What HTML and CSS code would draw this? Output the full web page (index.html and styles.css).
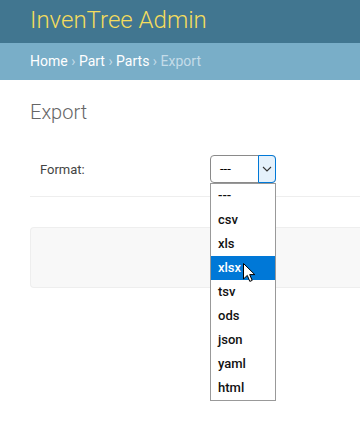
FILE: index.html
```html
<!DOCTYPE html>
<html>
  <head>
    <title>Export | InvenTree Admin</title>
    <link rel="stylesheet" href="styles.css">
  </head>
  <body>
    <div id="header">
      <h1 id="site-name">InvenTree Admin</h1>
    </div>

    <div class="breadcrumbs">
      <a href="#">Home</a> <span class="sep">&rsaquo;</span>
      <a href="#">Part</a> <span class="sep">&rsaquo;</span>
      <a href="#">Parts</a> <span class="sep">&rsaquo;</span>
      <span class="current">Export</span>
    </div>

    <div id="content">
      <h1 class="page-title">Export</h1>

      <form>
        <div class="form-row">
          <label class="field-label" for="format">Format:</label>
          <div class="select-wrap">
            <div class="select-box" id="format">
              <span class="select-value">---</span>
              <span class="select-arrow">
                <svg width="10" height="6" viewBox="0 0 10 6">
                  <path d="M1 1 L5 5 L9 1" fill="none" stroke="#333" stroke-width="1.1"/>
                </svg>
              </span>
            </div>

            <!-- open dropdown list -->
            <ul class="select-list">
              <li>---</li>
              <li>csv</li>
              <li>xls</li>
              <li class="active">xlsx</li>
              <li>tsv</li>
              <li>ods</li>
              <li>json</li>
              <li>yaml</li>
              <li>html</li>
            </ul>

            <svg class="cursor" width="13" height="20" viewBox="0 0 13 20">
              <path d="M0.5 0.5 L0.5 16 L4.3 12.4 L6.8 18.4 L9.2 17.4 L6.7 11.6 L11.8 11.6 Z" fill="#fff" stroke="#000" stroke-width="1"/>
            </svg>
          </div>
        </div>

        <div class="submit-row"></div>
      </form>
    </div>
  </body>
</html>
```

FILE: styles.css
```css
body {
  margin: 0;
  font-family: Roboto, "Liberation Sans", Arial, sans-serif;
  background-color: #fff;
  color: #333;
  min-height: 434px;
}

#header {
  background-color: #417690;
  height: 43px;
  padding: 0 30px;
  display: flex;
  align-items: center;
}

#site-name {
  margin: 0;
  font-size: 24px;
  font-weight: 300;
  color: #f5dd5d;
  line-height: 1;
  padding-bottom: 4px;
}

.breadcrumbs {
  background-color: #79aec8;
  height: 37px;
  line-height: 37px;
  padding: 0 30px;
  font-size: 14px;
  color: #c4dce8;
}

.breadcrumbs a {
  color: #fff;
  text-decoration: none;
}

.breadcrumbs .sep {
  color: #c4dce8;
}

#content {
  padding: 0 0 0 30px;
}

.page-title {
  margin: 0;
  padding: 20px 0 0;
  height: 45px;
  font-size: 20px;
  font-weight: 300;
  color: #666;
  line-height: 24px;
}

.form-row {
  display: flex;
  align-items: center;
  padding: 10px 10px 13px;
  border-bottom: 1px solid #eee;
  height: 28px;
}

.field-label {
  width: 170px;
  font-size: 13px;
  color: #444;
}

.select-wrap {
  position: relative;
}

.select-box {
  width: 64px;
  height: 26px;
  border: 1px solid #8a8a8a;
  border-radius: 4px;
  display: flex;
  background-color: #fff;
}

.select-value {
  flex: 1;
  padding-left: 9px;
  font-size: 13px;
  line-height: 26px;
  color: #000;
}

.select-arrow {
  width: 16px;
  margin: -1px -1px -1px 0;
  border: 1px solid #0078d7;
  border-radius: 0 4px 4px 0;
  background-color: #e5f1fb;
  display: flex;
  align-items: center;
  justify-content: center;
}

.select-list {
  position: absolute;
  left: 0;
  top: 28px;
  width: 64px;
  margin: 0;
  padding: 0;
  list-style: none;
  border: 1px solid #999;
  background-color: #fff;
  z-index: 2;
}

.select-list li {
  height: 24px;
  line-height: 24px;
  padding-left: 7px;
  font-size: 13px;
  font-weight: 500;
  color: #111;
}

.select-list li.active {
  background-color: #0078d7;
  color: #fff;
}

.cursor {
  position: absolute;
  left: 33px;
  top: 108px;
  z-index: 3;
}

.submit-row {
  margin-top: 30px;
  height: 59px;
  background-color: #f8f8f8;
  border: 1px solid #eee;
  border-right: none;
  border-radius: 4px 0 0 4px;
}
```
